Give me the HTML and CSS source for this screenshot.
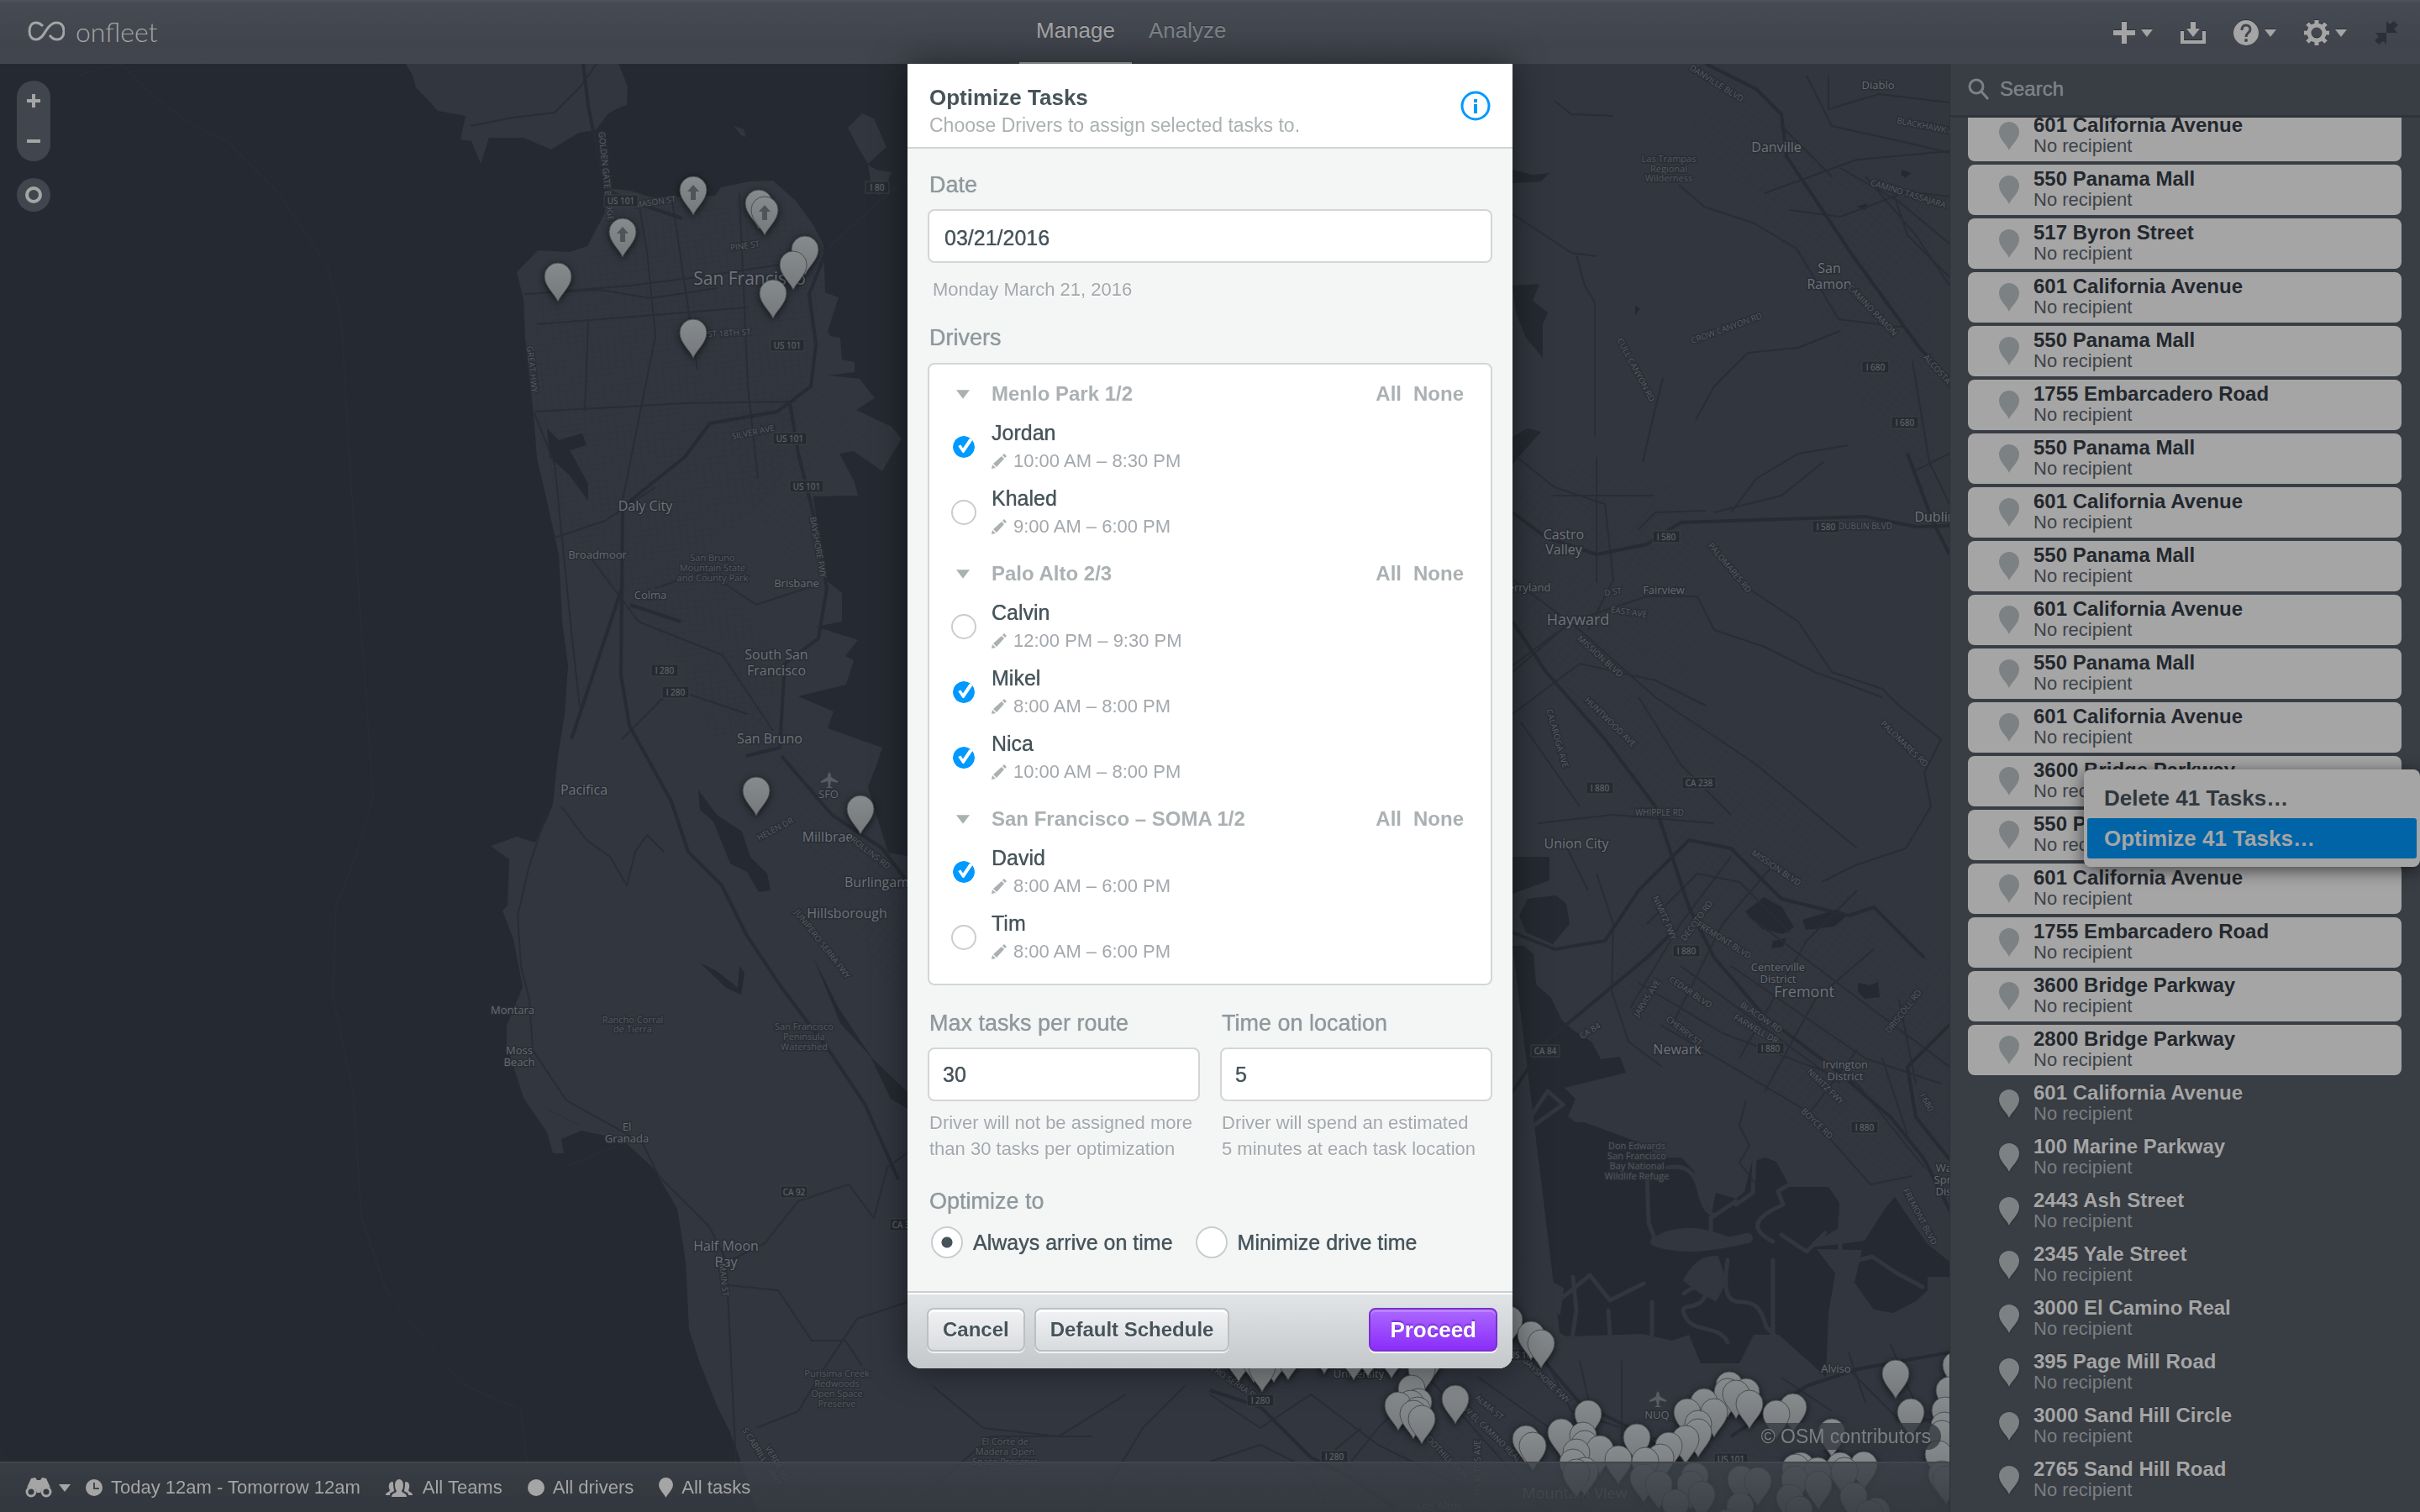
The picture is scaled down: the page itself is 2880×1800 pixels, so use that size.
FILE: index.html
```html
<!DOCTYPE html>
<html lang="en">
<head>
<meta charset="utf-8">
<meta name="viewport" content="width=device-width, initial-scale=1">
<title>Onfleet – Manage</title>
<link rel="stylesheet" href="styles.css">
</head>
<body>
<svg class="defs" width="0" height="0" aria-hidden="true">
  <defs>
    <symbol id="pin" viewBox="0 0 24 34"><path d="M12 34C10 28 0 21 0 12a12 12 0 0 1 24 0c0 9-10 16-12 22z"/></symbol>
    <symbol id="pencil" viewBox="0 0 18 18"><path d="M0 18l1-5 4 4zM2 12L12 3l3 3-9 10zM13 2l2-2 3 3-2 2z"/></symbol>
    <symbol id="caret" viewBox="0 0 14 9"><path d="M0 0h14L7 9z"/></symbol>
  </defs>
</svg>

<header class="topbar">
  <a class="logo" href="#" aria-label="onfleet">
    <svg width="44" height="24" viewBox="0 0 44 24" fill="none" stroke="currentColor" stroke-width="3"><path d="M26 17c3 4 6 5 9 5 5 0 8-4 8-10S40 2 34 2c-5 0-8 3-12 9-4 7-7 11-12 11-5 0-8-4-8-10S5 2 10 2c4 0 6 2 8 4"/></svg>
    <span>onfleet</span>
  </a>
  <nav class="tabs">
    <a class="tab tab-active" href="#">Manage</a>
    <a class="tab" href="#">Analyze</a>
  </nav>
  <div class="tools">
    <button class="tool" aria-label="Add">
      <svg width="26" height="26" viewBox="0 0 26 26"><path d="M10 0h6v10h10v6H16v10h-6V16H0v-6h10z"/></svg>
      <svg width="14" height="9"><use href="#caret"/></svg>
    </button>
    <button class="tool" aria-label="Import">
      <svg width="30" height="26" viewBox="0 0 30 26"><path d="M12 0h6v8h5l-8 10L7 8h5zM0 11h4v11h22V11h4v15H0z"/></svg>
    </button>
    <button class="tool" aria-label="Help">
      <svg width="30" height="30" viewBox="0 0 30 30"><circle cx="15" cy="15" r="15"/><path class="cut" d="M10 12c0-4 2-6 5-6s5 2 5 5c0 4-5 4-5 9" /><circle class="hole" cx="15" cy="24" r="2"/></svg>
      <svg width="14" height="9"><use href="#caret"/></svg>
    </button>
    <button class="tool" aria-label="Settings">
      <svg width="30" height="30" viewBox="0 0 30 30"><circle cx="15" cy="15" r="9" fill="none" stroke="currentColor" stroke-width="5"/><path fill="none" stroke="currentColor" stroke-width="5" d="M15 0v5M15 25v5M0 15h5M25 15h5M4 4l4 4M22 22l4 4M26 4l-4 4M8 22l-4 4"/></svg>
      <svg width="14" height="9"><use href="#caret"/></svg>
    </button>
    <button class="tool tool-dark" aria-label="Collapse">
      <svg width="28" height="28" viewBox="0 0 28 28"><path d="M14 0l4 4 5-4 5 5-5 4 4 5H14zM14 28l-4-4-5 4-5-5 5-4-4-5h13z"/></svg>
    </button>
  </div>
</header>

<main class="workspace">
  <section class="map" aria-label="Map">
    <svg class="canvas" viewBox="0 76 2320 1724" preserveAspectRatio="xMidYMid slice">
      <defs>
        <linearGradient id="pinfill" x1="0" y1="0" x2="0" y2="1"><stop offset="0" stop-color="#868b8d"/><stop offset="1" stop-color="#76797b"/></linearGradient>
        <path id="p" d="M0 46C-3 38-16 28-16 16a16 16 0 0 1 32 0C16 28 3 38 0 46z" fill="url(#pinfill)" stroke="#4b4e52" stroke-width="1"/>
        <g id="pa"><use href="#p"/><path d="M0 10l7 8H3v10h-6V18h-4z" fill="#4f5459"/></g>
        <g id="plane"><path d="M0-10q2 2 2 6l8 5v2l-8-2-1 6 3 2H-4l3-2-1-6-8 2V1l8-5q0-4 2-6z" fill="#585c63"/></g>
        <pattern id="grid" width="9" height="7" patternUnits="userSpaceOnUse" patternTransform="rotate(-6)"><path d="M0 0h9M0 0v7" stroke="#292d35" stroke-width="1" fill="none"/></pattern>
        <pattern id="grid2" width="10" height="8" patternUnits="userSpaceOnUse" patternTransform="rotate(38)"><path d="M0 0h10M0 0v8" stroke="#292d35" stroke-width="1" fill="none"/></pattern>
      </defs>
      <rect width="2320" height="1800" fill="#252931"/>
      <g fill="#32363f">
        <path d="M483 76l8 14 4 14 18 19 8 9 33 6-6 28 13 2 11 27 10-31 41 0 33 14 33-20 20-3 15-20 13-7 9-3 1-22-8-20-7-19z"/>
        <path d="M1009 152l17-17 14 6 15 34-22 20-12-20zM1033 196l10 6 18 3-6 14-8 14-10-12zM873 150l12 4 3 9-6-2z"/>
        <path d="M722 224l-2 29-21 40-21 7-38-2-25 26 8 32 2 46 10 92 4 51 12 52 14 63 4 80 7 52-4 58-8 50-6 57-7 18-14 28-22-7-31 11 22 16-2 55-6 6 13 34 11 57-19 46v23l20 63 28 41 7 25h13l-3-17 24-10 48 10 38 35 28 48 10 63 4 81 13 40 21 52 14 28 17 46 17 51h1418V70H1800v949h-720l-23-4-24-78 10-26 7-21-65-23 7-20-42-18 57-14 9-29-10-5 15-19-50-16 31-6v-34l-21-17-13-98 53-1-4-16-18-34 17-3 34 24 23-39-12-14-42-20 22-14-18-23-37-4 31-4v-12l-15-3-2-26-12-2-3-6 13-40-16-6-2-57-12-23-21-29-27-24-28 1-34 7-7 10-76 2-24-8z"/>
      </g>
      <path fill="url(#grid)" opacity=".55" d="M640 320l60-12 30-60 130-6 60-12 50 50 10 60-16 60-3 50-20 70-14 60-80 70-60 60-80-20-56-100-15-130zM690 610l90-10 60 60 90 130-20 100-60-10-60-120-60-60z"/>
      <g fill="url(#grid2)" opacity=".5">
        <path d="M860 500l120-50 50 70-60 30-20 130-60-80zM880 830l110 70 90 200v110l-60-90-100-200-60-70zM1800 590l80-40 120 30 30 100-20 140 120 110 60 120-100 40-100-70-60-70-60-110-70-80zM2060 90l120 90 120 60v370l-60-60-60-150-70-130-100-120zM1940 1090l120-90 180 80 80 60v230l-60 40-120-70-110-100-120-30zM1660 1630l120 60 160 20 260 20 120-60v130h-600l-80-90zM640 1370l80-30 40 20z"/>
      </g>
      <g fill="#252931">
        <path d="M651 510l14 14 28-8 5 14-20 6 22 40 0 20-22-30-24-22z"/>
        <path d="M831 940l22 30 30 20 10 30 20 20 4 20-14 2-14-24-20-10-20-50-16-14zM833 1146l20 10 25 20 2-26 6 8-4 26-18-8zM968 1140l30 60 40 60 42 40v20l-20-12-24-50-36-40z"/>
        <path d="M1800 202l24 6 20-2-10 10-34 2zM1800 340l32-2-8 20 18 14-6 14 0 40-20-24-12-30zM1800 520l18-10 16 4-18 20-12 14-4 6z"/>
        <path d="M1800 1020h44v28l-44 16zM1818 1070l34-4 12 10 4 24-20 24-32-14-8-20z"/>
        <path d="M1800 1126l14 0 11 10 3 36 18 16 13 27 14 12 21 13 11 21 23-3 7 19-73 18 13 13-9 21 9 7h10l74 27 14 15h28l15 16 7 28 14 22 5-24 24 7 10-8 9-36 16-5 13 5 16 30h46l13 19-1 30-37 23 40-4 28-4 25-39 11-13 21 31 18 25 26 21v18l-26 0v16l-14 13-27 14-23-4-23-32 9-39-54-1 22 29-8 47-3 76-56-50-30 0-17 34-46 0-14-34-20 7-35-8-92 3-7-5z"/>
        <path d="M2077 1085l16-12 6-5 22 12 14 24-14 8-24-6zM2145 1095l40-12 14 6-16 14-34 4zM2110 1120l16-3-4 10-14 2zM2211 1170l14 3 10-4 2 18-18 2-8-8z"/>
        <path d="M2264 202l10 4-6 6-6-4zM1946 364l6 3-6 8zM2210 246l12-4-2 8z"/>
      </g>
      <g fill="none" stroke="#32363f" stroke-linecap="round" stroke-linejoin="round">
        <path stroke-width="5" d="M1960 1400l2 56 8 20M1984 1390c34-6 36 20 40 34s8 18 14 22M2066 1430l-30 20v30M2088 1380l-2 40-20 14M2110 1478c-16-8-24-18-14-28s20-12 26-16l-6-16 14-8M2120 1470l30 20 22-22M2190 1450v40"/>
        <path stroke-width="12" d="M1970 1478c40 12 70 4 110-4"/>
        <path fill="#32363f" stroke-width="2" d="M1968 1474c30-18 60-12 90 0-20 8-60 14-90 0z"/>
        <path stroke-width="5" d="M1842 1299l-38 56 56-40zM2056 1500c-6 40 0 50 16 50s24 6 30 30l10 10M2004 1540c20-16 34-6 22 8s-30 0-20 20 40 8 50 30M1800 1500l18 30 26 26 24-18 24-20 24 30 40-20M1870 1600l6-40-4-40M1916 1590l-2-30M1966 1590v-40M2110 1500v90M2212 1500l16-4 30 20 30 16"/>
        <path fill="#32363f" stroke-width="2" d="M2004 1524c14-26 26-28 40-28l10 30-12 22-20-10zM1800 1500l20-4 16 24 24 14-4 30-20-6-20 20-16-10z"/>
      </g>
      <g fill="none" stroke="#2b2f37" stroke-width="1">
        <path d="M90 90l54-14 40 40 50 36 36 16 60 60 60 90 16 60 10 170 14 200 14 200-20 70-24 60-4 110 24 110 10 150 30 90 90 110 70 30 10 90 40 110M0 1728l10 26M650 1320l40 20M676 1388l60-24"/>
      </g>
      <g fill="none" stroke="#292d35" stroke-width="2" stroke-linejoin="round">
        <path d="M560 150l50-10 50-6 30-30 20-28M630 350l120-10 80-10 130-20M640 386l250-20M700 380l-4 110M636 490l180-10 130-2M760 240l10 60 10 100-40 200M800 240l30 200M880 230l10 230 12 110M624 350l90-5 60 10 80-12M636 492l24 60 20 200 10 90M660 640l60-20 60-40M700 660l60 80 100 40 60 90M780 700l60-20 60 40 60-20M740 880l60-60 90 30M668 960l30 40 28 20 20 34 10-40 14-20 20 20M650 970l-20 60-14 60 4 60 10 40 4 60 40 60 90 50 20 40 60 60 20 40 4 80 10 200 30 130M870 1500l40-20 40-50 60-20 30 40 16-60 40-30M866 1530l60 6 40 60 40 0 20 30M900 1700l50-20 30-50 40-60 60-20"/>
        <path d="M1800 540l50 40 60 20 10 90-30 60M1848 590h120M1900 544v150M1800 530l20-20M1800 255l40 26 30 20 30 4M1876 304l10 36 12 20v160M1955 550l14-60 10-40M1850 120l20 16 50 2M1998 220l30 26 60 20 50 30 30 50 20 34 80 10M2018 500l22-40 40-40 60-6 50-20M2060 610l30-40 50-30 60-10M1950 630l20-20 60-2M1800 800l70-60 90-30 60 0 20 40 60 20 60 30 80 30M1800 690l80 60 90 80 120 80 60 50 60 50M1800 850l80-60 90 20 60 30M1870 740l-80 60M1810 860l70 100M1830 980l90-10 120 10M1950 830l50 80 60 60M1860 1000l30 60M1900 1040l20 60-2 80 20 60 40 30M1960 1100l60-60 50 10 60 60M1950 1170l100 60 160 60 80 100M1940 1200l60-100 60-80M1990 1220l60-120 60-70M2070 1260l80-140 60-60M2100 1300l60-110 70-60M2150 1330l60-80M2060 1150l160 110 90 30M2080 1090l120 90 120 90M2000 1150l190 140M1976 1220l170 100 80 90 50-10M2078 1310l-8 30 12 24-12 20 20 26M2240 1260l30 90M2260 1190l20 100"/>
        <path d="M2150 90l30 60 90 20 50 12M2176 90v40l60-18 84 10M2120 150l60 60M2190 200l70 40 60 50M2100 230l110-40 110-10M2220 210l60 70 40 60M2130 250l60 8 80-30 50 6M2250 220l20 60 50 50M2276 430l20 120 24 50M2280 560l40-20M2040 610l80-20 50-40M2080 700l60 40 40 60 60 20 20 20 50 40-20 40 8 40-30 50-60 20-40 20"/>
        <path d="M1440 1660l60 40 60-40 80 60 120 60M1700 1640l80 90 60 70M1760 1640l140 100 60 60M1840 1620l30 60 120 40M1880 1620l20 90M1930 1620v90M1600 1750l40-50 60-60M2200 1630l60 60 50 0M2200 1610l20 60M2120 1640l60 40M1560 1760l20 30M2250 1600l20 50 20 40M1440 1740l60-20 60 30 60-50M1110 1650l60 50 90 10 80-50M1100 1780l80-70 120 0M1300 1800l60-100 50-50"/>
      </g>
      <g fill="none" stroke="#272b33" stroke-width="4" stroke-linejoin="round">
        <path d="M694 76l6 50 20 100M722 226l30 14 60 20M983 300l-20 50 8 60-6 50-40 30-80 14-30 40-50 40-24 20-2 200 10 60 50 90 20 60 40 40 30 60 40 60 60 80 40 60 40 90M940 480l10 60 20 80 14 80-10 60-40 30-6 100-40 10M930 900l60 70 60 40 30 40M810 740l-60-20M740 700l-60 180M1080 210l-100 90"/>
        <path d="M2030 76l60 30 30 30 6 50 20 30 60 90 80 110 60 60M1800 610l40 30 60 20 60-12 40-26 120-4 100-3 60 12 100-3M1800 740l40 60 70 80 60 80 40 120 30 60 60 70 80 60 70 60 40 50 40 80M1800 1110l50 20 60-10 40-60 60-60 50 10 60 60 80 20 30-10 60 60M1800 1300l40-60 60-50 60-50 30-30M2320 1220l-50 50 10 60 40 50M2270 540l30 80 20 40"/>
        <path d="M1440 1655l60 20 60 60 40 20 60 40M1820 1600l60 70 60 30 60 40M2060 1710l90-60 60-20 110-20"/>
      </g>
      <g class="city">
        <text class="c1" x="892" y="339">San Francisco</text>
        <text x="768" y="608">Daly City</text><text x="924" y="785">South San</text><text x="924" y="804">Francisco</text><text x="916" y="885">San Bruno</text><text x="695" y="946">Pacifica</text><text x="985" y="1002">Millbrae</text><text x="1048" y="1056">Burlingame</text><text x="1008" y="1093">Hillsborough</text><text x="864" y="1489">Half Moon</text><text x="864" y="1508">Bay</text>
        <text x="2114" y="181">Danville</text><text x="2177" y="325">San</text><text x="2177" y="344">Ramon</text><text x="1861" y="642">Castro</text><text x="1861" y="660">Valley</text><text class="c2" x="1878" y="744">Hayward</text><text x="2303" y="621">Dublin</text><text x="1876" y="1010">Union City</text><text class="c2" x="2147" y="1187">Fremont</text><text x="1996" y="1255">Newark</text><text class="c2" x="1874" y="1784">Mountain View</text>
      </g>
      <g class="town">
        <text x="711" y="665">Broadmoor</text><text x="774" y="713">Colma</text><text x="948" y="699">Brisbane</text><text x="610" y="1207">Montara</text><text x="618" y="1255">Moss</text><text x="618" y="1269">Beach</text><text x="746" y="1346">El</text><text x="746" y="1360">Granada</text><text x="2235" y="106">Diablo</text><text x="1812" y="704">Cherryland</text><text x="1980" y="707">Fairview</text><text x="2116" y="1156">Centerville</text><text x="2116" y="1170">District</text><text x="2196" y="1272">Irvington</text><text x="2196" y="1286">District</text><text x="2322" y="1395">Warm</text><text x="2324" y="1409">Springs</text><text x="2325" y="1423">District</text><text x="2185" y="1634">Alviso</text><text x="1713" y="1797">Los Altos</text><text x="1617" y="1640">University</text><text x="986" y="950">SFO</text><text x="1972" y="1689">NUQ</text>
      </g>
      <g class="park">
        <text x="848" y="668">San Bruno</text><text x="848" y="680">Mountain State</text><text x="848" y="692">and County Park</text>
        <text x="753" y="1218">Rancho Corral</text><text x="753" y="1229">de Tierra</text>
        <text x="957" y="1226">San Francisco</text><text x="957" y="1238">Peninsula</text><text x="957" y="1250">Watershed</text>
        <text x="996" y="1639">Purisima Creek</text><text x="996" y="1651">Redwoods</text><text x="996" y="1663">Open Space</text><text x="996" y="1675">Preserve</text>
        <text x="1196" y="1720">El Corte de</text><text x="1196" y="1732">Madera Open</text><text x="1196" y="1744">Space Preserve</text>
        <text x="1986" y="193">Las Trampas</text><text x="1986" y="205">Regional</text><text x="1986" y="216">Wilderness</text>
        <text x="1948" y="1368">Don Edwards</text><text x="1948" y="1380">San Francisco</text><text x="1948" y="1392">Bay National</text><text x="1948" y="1404">Wildlife Refuge</text>
      </g>
      <g class="road">
        <text transform="translate(718 210) rotate(84)">GOLDEN GATE BRIDGE</text><text transform="translate(780 244) rotate(-8)">MASON ST</text><text transform="translate(887 296) rotate(-8)">PINE ST</text><text transform="translate(868 400) rotate(-3)">ST 18TH ST</text><text transform="translate(630 440) rotate(84)">GREAT HWY</text><text transform="translate(897 518) rotate(-12)">SILVER AVE</text><text transform="translate(970 652) rotate(80)">BAYSHORE FWY</text><text transform="translate(924 990) rotate(-28)">HELEN DR</text><text transform="translate(1034 1018) rotate(38)">ROLLINS RD</text><text transform="translate(976 1126) rotate(52)">JUNIPERO SERRA FWY</text><text transform="translate(858 1524) rotate(84)">MAIN ST</text><text transform="translate(904 1736) rotate(58)">S CABRILLO HWY</text><text transform="translate(922 1744) rotate(60)">VERDE RD</text>
        <text transform="translate(2041 102) rotate(32)">DANVILLE BLVD</text><text transform="translate(2294 154) rotate(11)">BLACKHAWK RD</text><text transform="translate(2270 234) rotate(17)">CAMINO TASSAJARA</text><text transform="translate(2226 372) rotate(46)">CAMINO RAMON</text><text transform="translate(2312 452) rotate(48)">ALCOSTA BLVD</text><text transform="translate(2056 394) rotate(-20)">CROW CANYON RD</text><text transform="translate(1944 442) rotate(62)">CULL CANYON RD</text><text transform="translate(2220 630)">DUBLIN BLVD</text><text transform="translate(2056 678) rotate(50)">PALOMARES RD</text><text transform="translate(1920 708) rotate(-8)">D ST</text><text transform="translate(1938 732) rotate(8)">EAST AVE</text><text transform="translate(1902 784) rotate(42)">MISSION BLVD</text><text transform="translate(1914 862) rotate(44)">HUNTWOOD AVE</text><text transform="translate(1850 880) rotate(74)">CALAROGA AVE</text><text transform="translate(2264 888) rotate(44)">PALOMARES RD</text><text transform="translate(1975 971)">WHIPPLE RD</text><text transform="translate(2112 1036) rotate(34)">MISSION BLVD</text><text transform="translate(1978 1094) rotate(66)">NIMITZ FWY</text><text transform="translate(2022 1098) rotate(-54)">DECOTO RD</text><text transform="translate(2050 1122) rotate(32)">FREMONT BLVD</text><text transform="translate(1963 1190) rotate(-58)">JARVIS AVE</text><text transform="translate(2010 1184) rotate(34)">CEDAR BLVD</text><text transform="translate(2094 1214) rotate(34)">BLACOW RD</text><text transform="translate(2088 1228) rotate(30)">FARWELL DR</text><text transform="translate(2002 1230) rotate(38)">CHERRY ST</text><text transform="translate(2170 1296) rotate(44)">NIMITZ FWY</text><text transform="translate(2160 1340) rotate(44)">BOYCE RD</text><text transform="translate(2268 1206) rotate(-52)">DRISCOLL RD</text><text transform="translate(1894 1230) rotate(-32)">CA 84</text><text transform="translate(2290 1314) rotate(62)">I 680</text><text transform="translate(2282 1450) rotate(62)">FREMONT BLVD</text>
        <text transform="translate(1838 1646) rotate(44)">BAYSHORE FWY</text><text transform="translate(1770 1678) rotate(40)">ALMA ST</text><text transform="translate(1774 1710) rotate(44)">W EL CAMINO REAL</text><text transform="translate(1718 1736) rotate(46)">FOOTHILL EXPY</text><text transform="translate(1762 1750) rotate(-90)">LOS ALTOS AVE</text><text transform="translate(1460 1644) rotate(34)">JUNIPERO SERRA FWY</text>
      </g>
      <g class="shield">
        <g fill="#262a30" stroke="#3b3f46"><path d="M719 232h40v14h-40zM917 404h40v14h-40zM920 515h40v14h-40zM940 572h40v14h-40zM1030 216h28v14h-28zM775 791h32v14h-32zM788 817h32v14h-32zM929 1412h32v14h-32zM1059 1451h32v14h-32zM2216 430h32v14h-32zM2251 496h32v14h-32zM1967 632h32v14h-32zM2157 620h32v14h-32zM2002 925h40v14h-40zM1888 931h32v14h-32zM1991 1125h32v14h-32zM2091 1241h32v14h-32zM2203 1335h32v14h-32zM1822 1244h34v14h-34zM1484 1660h32v14h-32zM1572 1727h32v14h-32zM2040 1730h40v14h-40zM1792 1606h40v14h-40z"/></g>
        <text x="739" y="243">US 101</text><text x="937" y="415">US 101</text><text x="940" y="526">US 101</text><text x="960" y="583">US 101</text><text x="1044" y="227">I 80</text><text x="791" y="802">I 280</text><text x="804" y="828">I 280</text><text x="945" y="1423">CA 92</text><text x="1075" y="1462">CA 35</text><text x="2232" y="441">I 680</text><text x="2267" y="507">I 680</text><text x="1983" y="643">I 580</text><text x="2173" y="631">I 580</text><text x="2022" y="936">CA 238</text><text x="1904" y="942">I 880</text><text x="2007" y="1136">I 880</text><text x="2107" y="1252">I 880</text><text x="2219" y="1346">I 880</text><text x="1839" y="1255">CA 84</text><text x="1500" y="1671">I 280</text><text x="1588" y="1738">I 280</text><text x="2060" y="1741">US 101</text><text x="1812" y="1617">US 101</text>
      </g>
      <use href="#plane" x="987" y="929"/><use href="#plane" x="1973" y="1666"/>
      <g class="pins" transform="translate(1 2)">
        <use href="#pa" x="824" y="208"/><use href="#pa" x="740" y="258"/><use href="#p" x="902" y="224"/><use href="#pa" x="909" y="232"/><use href="#p" x="663" y="311"/><use href="#p" x="957" y="279"/><use href="#p" x="943" y="297"/><use href="#p" x="919" y="331"/><use href="#p" x="824" y="378"/><use href="#p" x="899" y="923"/><use href="#p" x="1023" y="945"/>
        <use href="#p" x="1473" y="1597"/><use href="#p" x="1491" y="1598"/><use href="#p" x="1515" y="1598"/><use href="#p" x="1532" y="1595"/><use href="#p" x="1501" y="1609"/><use href="#p" x="1575" y="1588"/><use href="#p" x="1610" y="1595"/><use href="#p" x="1627" y="1591"/><use href="#p" x="1655" y="1593"/><use href="#p" x="1699" y="1600"/><use href="#p" x="1691" y="1612"/><use href="#p" x="1795" y="1553"/><use href="#p" x="1821" y="1571"/><use href="#p" x="1833" y="1581"/>
        <use href="#p" x="2255" y="1617"/><use href="#p" x="1679" y="1635"/><use href="#p" x="1731" y="1647"/><use href="#p" x="1687" y="1651"/><use href="#p" x="1678" y="1653"/><use href="#p" x="1663" y="1655"/><use href="#p" x="1686" y="1661"/><use href="#p" x="1681" y="1665"/><use href="#p" x="1691" y="1671"/>
        <use href="#p" x="2057" y="1631"/><use href="#p" x="2055" y="1639"/><use href="#p" x="2077" y="1639"/><use href="#p" x="2065" y="1641"/><use href="#p" x="2027" y="1651"/><use href="#p" x="2081" y="1653"/><use href="#p" x="2133" y="1657"/><use href="#p" x="2007" y="1663"/><use href="#p" x="2039" y="1663"/><use href="#p" x="2273" y="1663"/><use href="#p" x="2113" y="1665"/><use href="#p" x="1889" y="1665"/><use href="#p" x="2020" y="1677"/><use href="#p" x="2020" y="1687"/><use href="#p" x="2179" y="1687"/><use href="#p" x="1857" y="1687"/><use href="#p" x="1883" y="1691"/><use href="#p" x="1947" y="1693"/><use href="#p" x="1815" y="1695"/><use href="#p" x="2005" y="1695"/><use href="#p" x="1885" y="1701"/><use href="#p" x="1985" y="1703"/><use href="#p" x="1823" y="1703"/><use href="#p" x="1903" y="1707"/><use href="#p" x="1875" y="1711"/><use href="#p" x="1975" y="1717"/><use href="#p" x="1925" y="1719"/><use href="#p" x="1957" y="1721"/><use href="#p" x="1871" y="1723"/><use href="#p" x="1885" y="1733"/><use href="#p" x="1875" y="1735"/>
        <use href="#p" x="2217" y="1726"/><use href="#p" x="2189" y="1727"/><use href="#p" x="2142" y="1727"/><use href="#p" x="2136" y="1729"/><use href="#p" x="2162" y="1733"/><use href="#p" x="2194" y="1733"/><use href="#p" x="2016" y="1739"/><use href="#p" x="1955" y="1741"/><use href="#p" x="2071" y="1743"/><use href="#p" x="2135" y="1743"/><use href="#p" x="2091" y="1745"/><use href="#p" x="1973" y="1749"/><use href="#p" x="2011" y="1749"/><use href="#p" x="2163" y="1749"/><use href="#p" x="2024" y="1761"/><use href="#p" x="2205" y="1763"/><use href="#p" x="2129" y="1765"/><use href="#p" x="1993" y="1771"/><use href="#p" x="2070" y="1775"/><use href="#p" x="2140" y="1779"/><use href="#p" x="2232" y="1781"/><use href="#p" x="2224" y="1784"/><use href="#p" x="2054" y="1795"/>
        <use href="#p" x="2327" y="1607"/><use href="#p" x="2319" y="1637"/><use href="#p" x="2314" y="1661"/><use href="#p" x="2313" y="1679"/><use href="#p" x="2310" y="1689"/><use href="#p" x="2306" y="1713"/><use href="#p" x="2310" y="1737"/><use href="#p" x="2315" y="1743"/>
      </g>
    </svg>
    <div class="zoomer">
      <div class="zoom-pair">
        <button aria-label="Zoom in"><svg width="18" height="18" viewBox="0 0 18 18"><path d="M7 1h4v6h6v4h-6v6H7v-6H1V7h6z"/></svg></button>
        <button aria-label="Zoom out"><svg width="18" height="18" viewBox="0 0 18 18"><path d="M1 7h16v4H1z"/></svg></button>
      </div>
      <button class="recenter" aria-label="Recenter"><svg width="22" height="22" viewBox="0 0 22 22"><circle cx="11" cy="11" r="8" fill="none" stroke="currentColor" stroke-width="4"/></svg></button>
    </div>
    <a class="credit" href="#">© OSM contributors</a>
    <div class="filters">
      <button class="f-view" aria-label="View"><svg width="32" height="24" viewBox="0 0 32 24"><path d="M7 1l5-1 2 3h4l2-3 5 1 5 11-4-1-6 2-2 5h-4l-2-5-6-2-4 1z"/><circle cx="7" cy="17" r="5" fill="none" stroke="currentColor" stroke-width="3"/><circle cx="25" cy="17" r="5" fill="none" stroke="currentColor" stroke-width="3"/></svg><svg width="14" height="9"><use href="#caret"/></svg></button>
      <button class="f-time"><svg width="20" height="20" viewBox="0 0 20 20"><circle cx="10" cy="10" r="10"/><path class="cut" d="M10 4v7h6"/></svg>Today 12am - Tomorrow 12am</button>
      <button class="f-teams"><svg width="32" height="22" viewBox="0 0 32 22"><path d="M7 22c0-5 5-4 6-7-3-4-3-14 3-14s6 10 3 14c1 3 6 2 6 7zM0 20c0-4 4-3 5-6-2-3-2-10 3-10 1 0 1 1 1 3 0 4 1 6 1 8-2 2-5 1-5 5zM32 20c0-4-4-3-5-6 2-3 2-10-3-10-1 0-1 1-1 3 0 4-1 6-1 8 2 2 5 1 5 5z"/></svg>All Teams</button>
      <button class="f-drivers"><svg width="20" height="20" viewBox="0 0 20 20"><circle cx="10" cy="10" r="10"/></svg>All drivers</button>
      <button class="f-tasks"><svg width="17" height="24"><use href="#pin"/></svg>All tasks</button>
    </div>
  </section>

  <aside class="sidebar">
    <label class="search">
      <svg width="26" height="26" viewBox="0 0 26 26" fill="none" stroke="currentColor" stroke-width="3"><circle cx="10" cy="10" r="8"/><path d="M16 16l8 9"/></svg>
      <input type="search" placeholder="Search" aria-label="Search">
    </label>
    <ul class="tasks">
      <li class="task sel"><svg><use href="#pin"/></svg><div><b>601 California Avenue</b><span>No recipient</span></div></li>
      <li class="task sel"><svg><use href="#pin"/></svg><div><b>550 Panama Mall</b><span>No recipient</span></div></li>
      <li class="task sel"><svg><use href="#pin"/></svg><div><b>517 Byron Street</b><span>No recipient</span></div></li>
      <li class="task sel"><svg><use href="#pin"/></svg><div><b>601 California Avenue</b><span>No recipient</span></div></li>
      <li class="task sel"><svg><use href="#pin"/></svg><div><b>550 Panama Mall</b><span>No recipient</span></div></li>
      <li class="task sel"><svg><use href="#pin"/></svg><div><b>1755 Embarcadero Road</b><span>No recipient</span></div></li>
      <li class="task sel"><svg><use href="#pin"/></svg><div><b>550 Panama Mall</b><span>No recipient</span></div></li>
      <li class="task sel"><svg><use href="#pin"/></svg><div><b>601 California Avenue</b><span>No recipient</span></div></li>
      <li class="task sel"><svg><use href="#pin"/></svg><div><b>550 Panama Mall</b><span>No recipient</span></div></li>
      <li class="task sel"><svg><use href="#pin"/></svg><div><b>601 California Avenue</b><span>No recipient</span></div></li>
      <li class="task sel"><svg><use href="#pin"/></svg><div><b>550 Panama Mall</b><span>No recipient</span></div></li>
      <li class="task sel"><svg><use href="#pin"/></svg><div><b>601 California Avenue</b><span>No recipient</span></div></li>
      <li class="task sel"><svg><use href="#pin"/></svg><div><b>3600 Bridge Parkway</b><span>No recipient</span></div></li>
      <li class="task sel anchor"><svg><use href="#pin"/></svg><div><b>550 Panama Mall</b><span>No recipient</span></div>
        <div class="menu" role="menu">
          <button role="menuitem">Delete 41 Tasks…</button>
          <button role="menuitem" class="menu-on">Optimize 41 Tasks…</button>
        </div>
      </li>
      <li class="task sel"><svg><use href="#pin"/></svg><div><b>601 California Avenue</b><span>No recipient</span></div></li>
      <li class="task sel"><svg><use href="#pin"/></svg><div><b>1755 Embarcadero Road</b><span>No recipient</span></div></li>
      <li class="task sel"><svg><use href="#pin"/></svg><div><b>3600 Bridge Parkway</b><span>No recipient</span></div></li>
      <li class="task sel"><svg><use href="#pin"/></svg><div><b>2800 Bridge Parkway</b><span>No recipient</span></div></li>
      <li class="task"><svg><use href="#pin"/></svg><div><b>601 California Avenue</b><span>No recipient</span></div></li>
      <li class="task"><svg><use href="#pin"/></svg><div><b>100 Marine Parkway</b><span>No recipient</span></div></li>
      <li class="task"><svg><use href="#pin"/></svg><div><b>2443 Ash Street</b><span>No recipient</span></div></li>
      <li class="task"><svg><use href="#pin"/></svg><div><b>2345 Yale Street</b><span>No recipient</span></div></li>
      <li class="task"><svg><use href="#pin"/></svg><div><b>3000 El Camino Real</b><span>No recipient</span></div></li>
      <li class="task"><svg><use href="#pin"/></svg><div><b>395 Page Mill Road</b><span>No recipient</span></div></li>
      <li class="task"><svg><use href="#pin"/></svg><div><b>3000 Sand Hill Circle</b><span>No recipient</span></div></li>
      <li class="task"><svg><use href="#pin"/></svg><div><b>2765 Sand Hill Road</b><span>No recipient</span></div></li>
    </ul>
  </aside>

  <div class="overlay">
    <form class="modal" role="dialog" aria-labelledby="dlg-title">
      <div class="m-head">
        <div>
          <h1 id="dlg-title">Optimize Tasks</h1>
          <p>Choose Drivers to assign selected tasks to.</p>
        </div>
        <button type="button" class="info" aria-label="Info"><svg width="36" height="36" viewBox="0 0 36 36"><circle cx="18" cy="18" r="16" fill="none" stroke="#0099ff" stroke-width="3"/><path fill="#0099ff" d="M16 10h4v4h-4zM16 16h4v11h-4z"/></svg></button>
      </div>
      <div class="m-body">
        <label class="label" for="date">Date</label>
        <input class="field" id="date" type="text" value="03/21/2016">
        <p class="hint hint-date">Monday March 21, 2016</p>
        <p class="label">Drivers</p>
        <div class="drivers">
          <section class="group">
            <div class="g-head"><svg width="16" height="11" viewBox="0 0 14 9"><path d="M0 0h14L7 9z"/></svg><h2>Menlo Park 1/2</h2><button type="button">All</button><button type="button">None</button></div>
            <label class="driver"><input type="checkbox" checked><span class="who"><span class="name">Jordan</span><span class="hours"><svg width="18" height="18"><use href="#pencil"/></svg>10:00 AM – 8:30 PM</span></span></label>
            <label class="driver"><input type="checkbox"><span class="who"><span class="name">Khaled</span><span class="hours"><svg width="18" height="18"><use href="#pencil"/></svg>9:00 AM – 6:00 PM</span></span></label>
          </section>
          <section class="group">
            <div class="g-head"><svg width="16" height="11" viewBox="0 0 14 9"><path d="M0 0h14L7 9z"/></svg><h2>Palo Alto 2/3</h2><button type="button">All</button><button type="button">None</button></div>
            <label class="driver"><input type="checkbox"><span class="who"><span class="name">Calvin</span><span class="hours"><svg width="18" height="18"><use href="#pencil"/></svg>12:00 PM – 9:30 PM</span></span></label>
            <label class="driver"><input type="checkbox" checked><span class="who"><span class="name">Mikel</span><span class="hours"><svg width="18" height="18"><use href="#pencil"/></svg>8:00 AM – 8:00 PM</span></span></label>
            <label class="driver"><input type="checkbox" checked><span class="who"><span class="name">Nica</span><span class="hours"><svg width="18" height="18"><use href="#pencil"/></svg>10:00 AM – 8:00 PM</span></span></label>
          </section>
          <section class="group">
            <div class="g-head"><svg width="16" height="11" viewBox="0 0 14 9"><path d="M0 0h14L7 9z"/></svg><h2>San Francisco – SOMA 1/2</h2><button type="button">All</button><button type="button">None</button></div>
            <label class="driver"><input type="checkbox" checked><span class="who"><span class="name">David</span><span class="hours"><svg width="18" height="18"><use href="#pencil"/></svg>8:00 AM – 6:00 PM</span></span></label>
            <label class="driver"><input type="checkbox"><span class="who"><span class="name">Tim</span><span class="hours"><svg width="18" height="18"><use href="#pencil"/></svg>8:00 AM – 6:00 PM</span></span></label>
          </section>
        </div>
        <div class="pair">
          <div>
            <label class="label" for="max">Max tasks per route</label>
            <input class="field field-num" id="max" type="text" value="30">
            <p class="hint">Driver will not be assigned more<br>than 30 tasks per optimization</p>
          </div>
          <div>
            <label class="label" for="stay">Time on location</label>
            <input class="field field-num" id="stay" type="text" value="5">
            <p class="hint">Driver will spend an estimated<br>5 minutes at each task location</p>
          </div>
        </div>
        <fieldset class="goal">
          <legend class="label">Optimize to</legend>
          <div class="choices">
            <label><input type="radio" name="goal" checked>Always arrive on time</label>
            <label><input type="radio" name="goal">Minimize drive time</label>
          </div>
        </fieldset>
      </div>
      <div class="m-foot">
        <button type="button" class="btn">Cancel</button>
        <button type="button" class="btn">Default Schedule</button>
        <button type="submit" class="btn btn-go">Proceed</button>
      </div>
    </form>
  </div>
</main>
</body>
</html>
```
FILE: styles.css
```css
* { box-sizing: border-box; }
body {
  margin: 0;
  height: 100vh;
  display: flex;
  flex-direction: column;
  overflow: hidden;
  background: #252931;
  font-family: "Liberation Sans", Arial, sans-serif;
  font-size: 22px;
  color: #a5a5a5;
}
button {
  margin: 0;
  padding: 0;
  border: 0;
  background: none;
  font: inherit;
  color: inherit;
  cursor: pointer;
}
a { color: inherit; text-decoration: none; }
h1, h2, p, ul, fieldset { margin: 0; padding: 0; }
svg { fill: currentColor; flex: none; }
svg[fill="none"] { fill: none; }
.defs { position: absolute; }

/* Top bar */
.topbar {
  display: grid;
  grid-template-columns: 1fr auto 1fr;
  flex: none;
  height: 76px;
  border-top: 2px solid #4d525b;
  background: linear-gradient(#454b53, #41444d 70%, #40464e);
}
.logo {
  display: flex;
  align-items: center;
  gap: 13px;
  padding: 0 0 4px 33px;
  font-family: Lato, sans-serif;
  font-weight: 300;
  font-size: 32px;
}
.tabs { display: flex; min-width: 454px; }
.tab {
  display: flex;
  align-items: center;
  padding: 0 20px 6px;
  font-size: 26px;
  color: #7d8288;
  text-shadow: 0 -1px 0 #30343b;
}
.tab-active { color: #a5a5a5; border-bottom: 2px solid #a5a5a5; padding-bottom: 4px; }
.tools {
  display: flex;
  align-items: center;
  justify-content: flex-end;
  gap: 33px;
  padding-right: 26px;
}
.tool { display: flex; align-items: center; gap: 7px; filter: drop-shadow(0 -1px 0 #2b2f36); }
.tool-dark { color: #2b3038; filter: none; }
.cut { fill: none; stroke: #41464e; stroke-width: 3; }
.hole { fill: #41464e; }

/* Workspace */
.workspace { position: relative; display: flex; flex: 1; min-height: 0; }
.map { position: relative; flex: 1; min-width: 0; overflow: hidden; }
.canvas { position: absolute; inset: 0; width: 100%; height: 100%; }
.canvas text {
  font-family: "Open Sans", "Noto Sans", sans-serif;
  text-anchor: middle;
  paint-order: stroke;
  stroke: #2a2e36;
  stroke-width: 3px;
}
.city { fill: #6f737a; font-size: 16px; font-weight: 500; }
.canvas .c1 { font-size: 21px; }
.canvas .c2 { font-size: 18px; }
.town { fill: #666a71; font-size: 13px; }
.park { fill: #53575f; font-size: 11px; }
.road { fill: #585c63; font-size: 10px; }
.shield { fill: #666a71; font-size: 10px; }
.pins { filter: drop-shadow(0 2px 4px rgba(0, 0, 0, .6)); }

.zoomer {
  position: absolute;
  top: 20px;
  left: 20px;
  display: flex;
  flex-direction: column;
  gap: 20px;
}
.zoom-pair { display: flex; flex-direction: column; border-radius: 20px; background: #41464e; }
.zoom-pair button { width: 40px; height: 48px; }
.recenter { width: 40px; height: 40px; border-radius: 20px; background: #41464e; }
.zoomer svg { display: block; margin: auto; }

.credit {
  position: absolute;
  right: 10px;
  bottom: 74px;
  padding: 0 12px;
  border-radius: 16px;
  background: rgba(49, 53, 60, .75);
  color: #7b7f83;
  font-size: 23px;
  line-height: 32px;
}
.filters {
  position: absolute;
  inset: auto 0 0;
  display: flex;
  align-items: center;
  gap: 30px;
  height: 60px;
  padding-left: 30px;
  border-top: 2px solid #42464e;
  background: linear-gradient(rgba(61, 66, 74, .8), rgba(53, 57, 64, .85));
  text-shadow: 0 -1px 0 #20242a;
}
.filters button { display: flex; align-items: center; gap: 10px; }
.filters .f-view { gap: 8px; margin-right: -12px; }
.filters .f-teams { gap: 12px; }
.filters .cut { stroke-width: 2px; }

/* Sidebar */
.sidebar {
  display: flex;
  flex-direction: column;
  width: 560px;
  flex: none;
  border-left: 1px solid #2c3037;
  background: #393d44;
}
.search {
  display: flex;
  align-items: center;
  gap: 12px;
  flex: none;
  height: 64px;
  padding: 0 22px 2px 21px;
  border-bottom: 3px solid #2f333a;
  color: #7d8184;
}
.search input {
  flex: 1;
  padding: 0;
  border: 0;
  outline: 0;
  background: none;
  color: #a5a5a5;
  font: 24px "Liberation Sans", Arial, sans-serif;
}
.search input::placeholder { color: #7d8184; opacity: 1; text-shadow: 0 0 1px #7d8184; }
.tasks {
  display: flex;
  flex-direction: column;
  justify-content: flex-end;
  gap: 4px;
  flex: 1;
  min-height: 0;
  padding: 0 22px 8px 21px;
  list-style: none;
  overflow: hidden;
}
.task {
  display: flex;
  flex: none;
  gap: 17px;
  height: 60px;
  padding: 4px 0 0 37px;
  border-radius: 8px;
  color: #7a7e81;
}
.task > svg { width: 24px; height: 34px; margin-top: 9px; color: #7c8183; filter: drop-shadow(0 1px 1px #2a2d32); }
.task b, .task span { display: block; }
.task b { font-size: 24px; line-height: 26px; color: #a5a5a5; text-shadow: 0 -1px 0 #2c3036; }
.task span { font-size: 22px; line-height: 24px; }
.sel { background: #a5a5a5; color: #3d4349; }
.sel > svg { filter: none; }
.sel b { color: #23282e; text-shadow: none; }
.anchor { position: relative; }
.menu {
  position: absolute;
  z-index: 2;
  right: -22px;
  top: -48px;
  width: 400px;
  padding: 10px 4px;
  border-radius: 8px;
  background: #a5a5a5;
  box-shadow: 0 4px 20px rgba(0, 0, 0, .6);
}
.menu button {
  display: block;
  width: 100%;
  height: 48px;
  padding: 0 20px;
  border-radius: 3px;
  text-align: left;
  font-size: 26px;
  font-weight: 700;
  color: #31373d;
}
.menu .menu-on { background: #0064a7; color: #a5a5a5; }

/* Optimize dialog */
.overlay {
  position: absolute;
  z-index: 3;
  inset: 0;
  display: flex;
  justify-content: center;
  align-items: flex-start;
  pointer-events: none;
}
.modal {
  width: 720px;
  overflow: hidden;
  border-radius: 0 0 16px 16px;
  background: #f4f6f6;
  box-shadow: 0 0 40px rgba(0, 0, 0, .5);
  color: #46545a;
  pointer-events: auto;
}
.m-head {
  display: flex;
  justify-content: space-between;
  align-items: flex-start;
  height: 101px;
  padding: 23px 26px 0;
  border-bottom: 2px solid #d2d4d5;
  background: #fff;
}
.m-head h1 { font-size: 26px; line-height: 34px; color: #46545a; }
.m-head p { font-size: 23px; line-height: 32px; color: #abb1b3; }
.info { height: 36px; margin-top: 9px; }
.info svg { display: block; }
.m-body { padding: 25px 24px 0; }
.label {
  display: block;
  padding: 0 2px;
  font-size: 27px;
  line-height: 36px;
  color: #8f999c;
  text-shadow: 0 0 1px #8f999c;
}
.field {
  display: block;
  width: 100%;
  height: 64px;
  margin-top: 11px;
  padding: 5px 18px 0;
  border: 2px solid #d3d5d7;
  border-radius: 8px;
  background: #fff;
  color: #46545a;
  font: 25px "Liberation Sans", Arial, sans-serif;
  text-shadow: 0 0 1px #46545a;
}
.field-num { padding: 0 16px; }
.hint { padding: 0 2px; font-size: 22px; line-height: 31px; color: #a3a8ad; text-shadow: 0 1px 0 #fff; }
.hint-date { padding: 0 6px; margin: 16px 0 24px; }
.drivers {
  display: flex;
  flex-direction: column;
  gap: 12px;
  margin: 12px 0 27px;
  padding: 19px 32px 10px 25px;
  border: 2px solid #d3d5d7;
  border-radius: 8px;
  background: #fff;
}
.g-head {
  display: flex;
  align-items: center;
  gap: 14px;
  height: 46px;
  padding: 0 0 14px 7px;
  font-size: 24px;
  line-height: 32px;
  font-weight: 700;
  color: #abb1b3;
}
.g-head h2 { flex: 1; padding-left: 12px; font-size: 24px; }
.driver { display: flex; gap: 18px; height: 78px; }
.driver input {
  flex: none;
  appearance: none;
  width: 30px;
  height: 30px;
  margin: 18px 0 0 1px;
  border: 2px solid #c9cdd0;
  border-radius: 50%;
  background: #fff;
}
.driver input:checked { border-color: #fff; background: #0099ff; background-clip: padding-box; }
.driver input:checked::after {
  content: "";
  display: block;
  width: 26px;
  height: 26px;
  background: #fff;
  clip-path: polygon(24% 46%, 36% 40%, 46% 56%, 76% 12%, 92% 16%, 50% 78%, 44% 76%);
}
.name { display: block; font-size: 25px; line-height: 32px; text-shadow: 0 0 1px #46545a; }
.hours { display: flex; align-items: center; gap: 8px; font-size: 22px; line-height: 36px; color: #a3a8ad; }
.hours svg { color: #abb1b3; }
.pair { display: grid; grid-template-columns: 1fr 1fr; gap: 24px; }
.pair .hint { margin-top: 10px; white-space: nowrap; }
.goal { min-width: 0; margin-top: 29px; border: 0; }
.choices { display: flex; gap: 27px; margin: 12px 0 0 4px; padding-bottom: 39px; }
.choices label { display: flex; align-items: center; gap: 12px; font-size: 25px; line-height: 38px; text-shadow: 0 0 1px #46545a; }
.choices input {
  appearance: none;
  width: 38px;
  height: 38px;
  margin: 0;
  border: 2px solid #c9cdd0;
  border-radius: 50%;
  background: #fff;
}
.choices input:checked { background: radial-gradient(circle, #46545a 6px, #fff 7px); }
.m-foot {
  display: flex;
  align-items: flex-start;
  gap: 11px;
  height: 92px;
  padding: 18px 18px 0 23px;
  border-top: 2px solid #cbcfcf;
  background: linear-gradient(#e1e5e8, #c4c8ca);
  box-shadow: inset 0 2px 0 #fff;
}
.btn {
  height: 52px;
  padding: 0 17px;
  border: 2px solid #bcc0c3;
  border-radius: 8px;
  background: linear-gradient(#f1f2f3, #d9dcdf);
  box-shadow: inset 0 3px 0 #fff, 0 2px 0 rgba(255, 255, 255, .7);
  font-size: 24px;
  font-weight: 700;
  color: #46545a;
  text-shadow: 0 1px 0 #fff;
}
.btn-go {
  margin-left: auto;
  padding: 0 23px;
  border-color: #7a2fd0;
  background: linear-gradient(#ab68ff, #8b2df9);
  box-shadow: inset 0 3px 0 #b884ff, 0 2px 0 #fff;
  font-size: 26px;
  color: #fff;
  text-shadow: 0 -2px 2px rgba(90, 20, 180, .6);
}
```
